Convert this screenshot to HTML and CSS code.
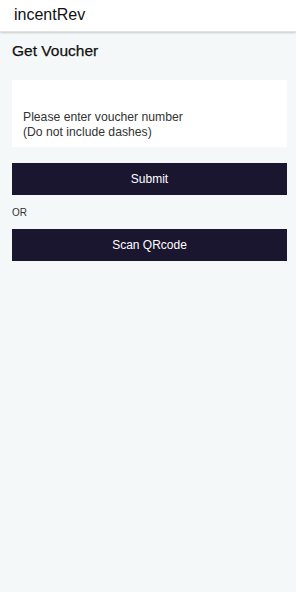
FILE: index.html
```html
<!DOCTYPE html>
<html>
<head>
    <title>incentRev</title>
    <link rel="stylesheet" href="styles.css">
</head>
<body>
    <div class="header">incentRev</div>
    <div class="container">
        <h1>Get Voucher</h1>
        <div class="voucher-box">
            <input type="text" id="voucher" placeholder="Please enter voucher number">
            <div class="hint">(Do not include dashes)</div>
        </div>
        <button type="button">Submit</button>
        <div class="or">OR</div>
        <button type="button">Scan QRcode</button>
    </div>
</body>
</html>
```

FILE: styles.css
```css
body { margin: 0; background: #f5f8f8; font-family: "Liberation Sans", Arial, sans-serif; color: #111; height: 592px; }
.header { height: 31px; line-height: 30px; padding-left: 14px; background: #fff; font-size: 16px; box-shadow: 0 1px 2px rgba(0,0,0,0.18); border-bottom: 1px solid #e2e4e4; }
.container { padding: 0 9px 0 12px; }
h1 { margin: 10px 0 0; font-size: 15.5px; font-weight: normal; line-height: 18px; -webkit-text-stroke: 0.25px #111; }
.voucher-box { margin-top: 20px; background: #fff; height: 67px; padding: 27px 11px 0; box-sizing: border-box; }
.voucher-box input { border: none; padding: 0; margin: 0; font: inherit; font-size: 12.2px; width: 100%; line-height: 15px; height: 15px; outline: none; background: transparent; }
.voucher-box input::placeholder { color: #333; }
.hint { font-size: 12.2px; line-height: 15px; color: #333; }
button { display: block; width: 100%; height: 32px; background: #1b1630; color: #fff; border: none; font-family: inherit; font-size: 12px; cursor: pointer; }
.voucher-box + button { margin-top: 16px; }
.or { font-size: 10px; color: #333; margin: 13px 0 12px; line-height: 9px; }
```
